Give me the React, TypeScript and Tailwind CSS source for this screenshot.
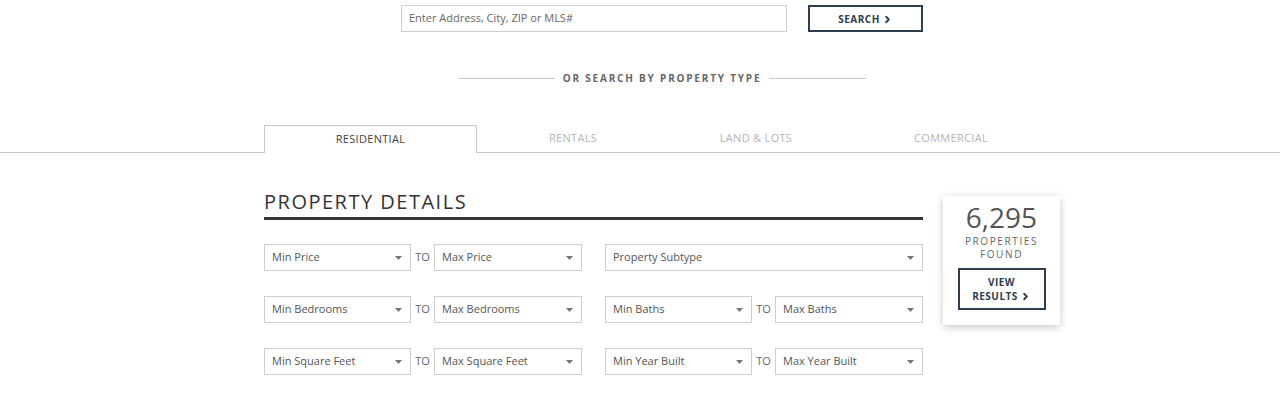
import { ChevronRight } from "lucide-react";

const font = { fontFamily: '"Open Sans", "Liberation Sans", sans-serif' };

function Caret() {
  return (
    <svg width="7" height="4" viewBox="0 0 7 4" className="shrink-0">
      <path d="M0 0 L7 0 L3.5 4 Z" fill="#777" />
    </svg>
  );
}

function Select({ label, w }: { label: string; w: string }) {
  return (
    <div
      className={`${w} h-[27px] border border-[#cfcfcf] bg-white flex items-center justify-between pl-[7px] pr-[8px] text-[11px] text-[#555]`}
    >
      <span>{label}</span>
      <Caret />
    </div>
  );
}

function Range({ a, b }: { a: string; b: string }) {
  return (
    <div className="flex items-center">
      <Select label={a} w="w-[147px]" />
      <span className="w-[23px] text-center text-[11px] text-[#666]">TO</span>
      <Select label={b} w="w-[148px]" />
    </div>
  );
}

const tabs = [
  { name: "RESIDENTIAL", w: "w-[213px]", active: true },
  { name: "RENTALS", w: "w-[192px]", active: false },
  { name: "LAND & LOTS", w: "w-[174px]", active: false },
  { name: "COMMERCIAL", w: "w-[216px]", active: false },
];

export default function App() {
  return (
    <div className="w-full h-[400px] bg-white overflow-hidden" style={font}>
      <div className="w-[796px] ml-[264px] pt-[5px]">
        {/* search bar */}
        <div className="flex items-center pl-[137px]">
          <div className="w-[386px] h-[27px] border border-[#d0d0d0] flex items-center pl-[7px] text-[11px] text-[#666]">
            Enter Address, City, ZIP or MLS#
          </div>
          <button className="ml-[21px] w-[115px] h-[27px] border-2 border-[#2d3e50] flex items-center justify-center gap-[2px] pt-px text-[10px] font-bold tracking-[0.5px] text-[#2d3e50]">
            SEARCH
            <ChevronRight size={11} strokeWidth={4} />
          </button>
        </div>

        {/* divider */}
        <div className="mt-[39px] ml-[194px] w-[408px] flex items-center gap-[8px]">
          <div className="flex-1 h-px bg-[#c8c8c8]" />
          <span className="text-[10px] font-bold tracking-[1.8px] text-[#666]">
            OR SEARCH BY PROPERTY TYPE
          </span>
          <div className="flex-1 h-px bg-[#c8c8c8]" />
        </div>
      </div>

      {/* tabs */}
      <div className="mt-[39px] border-b border-[#c8c8c8]">
        <div className="ml-[264px] flex">
          {tabs.map((t) =>
            t.active ? (
              <div
                key={t.name}
                className={`${t.w} h-[28px] -mb-px border border-b-0 border-[#c8c8c8] bg-white flex items-center justify-center text-[11px] text-[#444] tracking-[0.3px]`}
              >
                {t.name}
              </div>
            ) : (
              <div
                key={t.name}
                className={`${t.w} h-[27px] flex items-center justify-center text-[11px] text-[#b5b5b5] tracking-[0.3px]`}
              >
                {t.name}
              </div>
            )
          )}
        </div>
      </div>

      {/* details */}
      <div className="ml-[264px] w-[796px] flex gap-[20px] mt-[36px]">
        <div className="w-[659px]">
          <h2 className="text-[20px] leading-[26px] tracking-[1.5px] text-[#333] font-normal">
            PROPERTY DETAILS
          </h2>
          <div className="mt-[2px] h-[3px] bg-[#333]" />
          <div className="mt-[24px] flex flex-col gap-[25px]">
            <div className="flex justify-between">
              <Range a="Min Price" b="Max Price" />
              <Select label="Property Subtype" w="w-[318px]" />
            </div>
            <div className="flex justify-between">
              <Range a="Min Bedrooms" b="Max Bedrooms" />
              <Range a="Min Baths" b="Max Baths" />
            </div>
            <div className="flex justify-between">
              <Range a="Min Square Feet" b="Max Square Feet" />
              <Range a="Min Year Built" b="Max Year Built" />
            </div>
          </div>
        </div>

        <div className="mt-[7px] w-[117px] h-[129px] bg-white shadow-[0_2px_8px_rgba(0,0,0,0.22)] flex flex-col items-center pt-[3px]">
          <div className="text-[28px] leading-[36px] text-[#555]">6,295</div>
          <div className="text-[10px] leading-[13px] tracking-[1.6px] text-[#666] text-center">
            PROPERTIES
            <br />
            FOUND
          </div>
          <button className="mt-[7px] w-[88px] h-[42px] border-2 border-[#2d3e50] flex flex-col items-center justify-center text-[10px] leading-[14px] font-bold tracking-[0.5px] text-[#2d3e50]">
            <span>VIEW</span>
            <span className="flex items-center gap-[2px]">
              RESULTS
              <ChevronRight size={11} strokeWidth={4} />
            </span>
          </button>
        </div>
      </div>
    </div>
  );
}
